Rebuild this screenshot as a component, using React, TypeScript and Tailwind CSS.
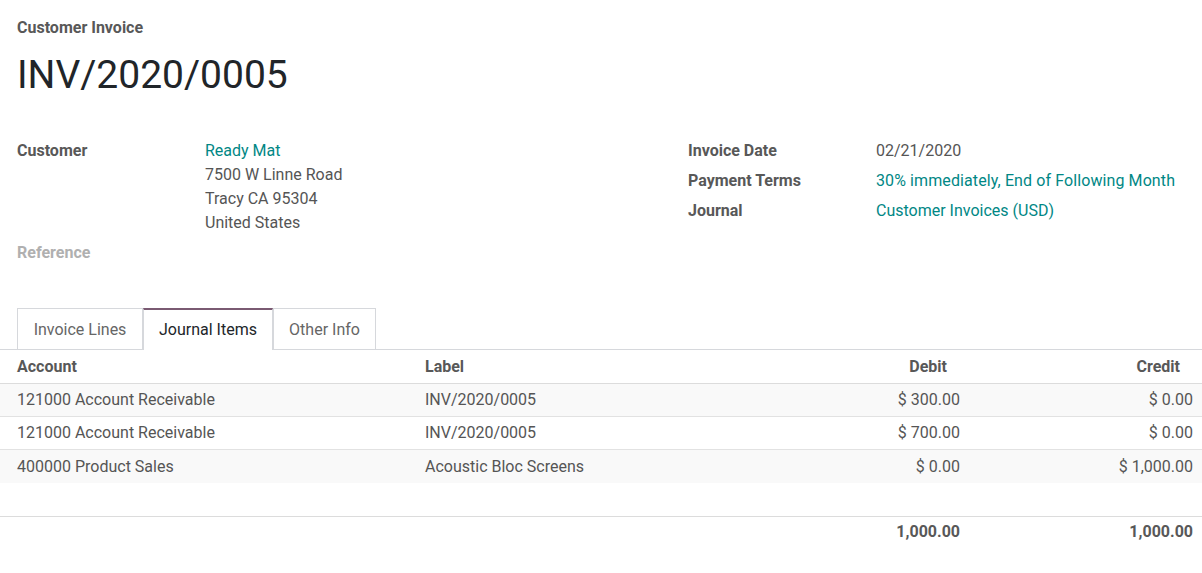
import React from "react";

const rows = [
  { account: "121000 Account Receivable", label: "INV/2020/0005", debit: "$ 300.00", credit: "$ 0.00", bg: "bg-[#f9f9f9]" },
  { account: "121000 Account Receivable", label: "INV/2020/0005", debit: "$ 700.00", credit: "$ 0.00", bg: "bg-white" },
  { account: "400000 Product Sales", label: "Acoustic Bloc Screens", debit: "$ 0.00", credit: "$ 1,000.00", bg: "bg-[#f9f9f9]" },
];

export default function App() {
  return (
    <div className="w-[1202px] h-[573px] bg-white overflow-hidden text-[#555555] text-[16px]" style={{ fontFamily: "Roboto, 'Noto Sans', sans-serif" }}>
      <div className="px-[17px] pt-[18px]">
        <div className="font-bold text-[16px] leading-[20px] text-[#585858]">Customer Invoice</div>
        <h1 className="mt-[13px] text-[39px] leading-[48px] text-[#212529]">INV/2020/0005</h1>
        <div className="mt-[40px] flex">
          <div className="w-[671px]">
            <div className="flex">
              <div className="w-[188px] font-bold leading-[24px] text-[#585858]">Customer</div>
              <div className="leading-[24px]">
                <div className="text-[#018785]">Ready Mat</div>
                <div>7500 W Linne Road</div>
                <div>Tracy CA 95304</div>
                <div>United States</div>
              </div>
            </div>
            <div className="mt-[6px] font-bold leading-[24px] text-[#b0b0b0]">Reference</div>
          </div>
          <div>
            <div className="flex leading-[24px] h-[30px]">
              <div className="w-[188px] font-bold text-[#585858]">Invoice Date</div>
              <div>02/21/2020</div>
            </div>
            <div className="flex leading-[24px] h-[30px]">
              <div className="w-[188px] font-bold text-[#585858]">Payment Terms</div>
              <div className="text-[#018785] tracking-[0.1px]">30% immediately, End of Following Month</div>
            </div>
            <div className="flex leading-[24px] h-[30px]">
              <div className="w-[188px] font-bold text-[#585858]">Journal</div>
              <div className="text-[#018785]">Customer Invoices (USD)</div>
            </div>
          </div>
        </div>
        <div className="mt-[43px] flex h-[42px]">
          <div className="w-[126px] border border-b-0 border-[#d6d8dc] flex items-center justify-center text-[#666]">Invoice Lines</div>
          <div className="w-[130px] border-t-2 border-t-[#7a5a72] border-x border-x-[#d6d8dc] bg-white flex items-center justify-center text-[#212529] relative z-10 h-[42px]">Journal Items</div>
          <div className="w-[103px] border border-b-0 border-[#d6d8dc] flex items-center justify-center text-[#666]">Other Info</div>
        </div>
      </div>
      <div className="border-t border-[#d6d8dc] -mt-px">
        <div className="grid grid-cols-[408px_352px_209px_233px] h-[34px] items-center font-bold text-[#585858] border-b border-[#dcdcdc]">
          <div className="pl-[17px]">Account</div>
          <div className="pl-[17px]">Label</div>
          <div className="text-right pr-[22px]">Debit</div>
          <div className="text-right pr-[22px]">Credit</div>
        </div>
        {rows.map((r, i) => (
          <div key={i} className={`grid grid-cols-[408px_352px_209px_233px] h-[33px] items-center ${r.bg} ${i < 2 ? "border-b border-[#e2e2e2]" : ""}`}>
            <div className="pl-[17px]">{r.account}</div>
            <div className="pl-[17px]">{r.label}</div>
            <div className="text-right pr-[9px]">{r.debit}</div>
            <div className="text-right pr-[9px]">{r.credit}</div>
          </div>
        ))}
        <div className="h-[33px]" />
        <div className="grid grid-cols-[408px_352px_209px_233px] h-[31px] items-center font-bold text-[#585858] border-t border-[#dcdcdc]">
          <div />
          <div />
          <div className="text-right pr-[9px]">1,000.00</div>
          <div className="text-right pr-[9px]">1,000.00</div>
        </div>
      </div>
    </div>
  );
}
